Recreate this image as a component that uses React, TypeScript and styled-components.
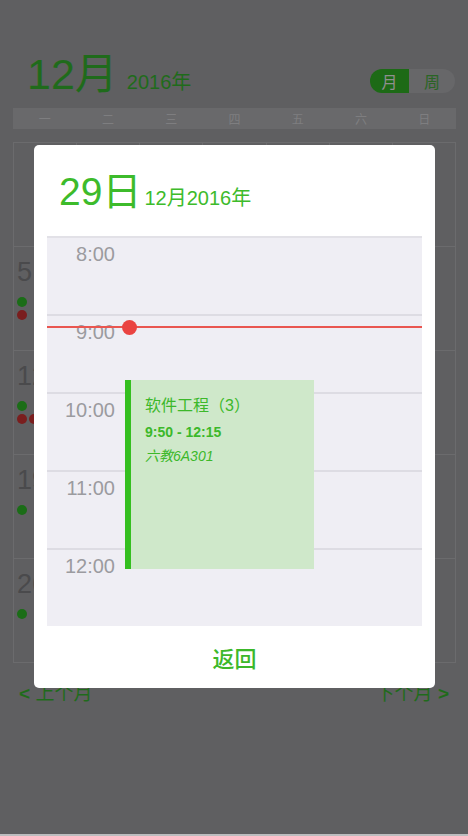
import React from "react";
import styled, { createGlobalStyle } from "styled-components";

const FONT = `"Liberation Sans", "Noto Sans CJK SC", sans-serif`;
const HOUR = 78;
const START = 8;

const GlobalStyle = createGlobalStyle`
  html, body { margin: 0; padding: 0; background: #5f5f61; }
  body { font-family: ${FONT}; }
  * { box-sizing: border-box; }
`;

const Page = styled.div`
  position: relative;
  width: 468px;
  height: 836px;
  overflow: hidden;
  background: #5f5f61;
  border-bottom: 2px solid #bdbdbf;
`;

const Header = styled.div`
  display: flex;
  align-items: flex-end;
  justify-content: space-between;
  padding: 52px 13px 11px 27px;
`;

const TitleGroup = styled.div`
  display: flex;
  align-items: baseline;
  gap: 9px;
  color: #1f6b1b;
`;

const BigTitle = styled.span`
  font-size: 43px;
  line-height: 45px;
`;

const SmallTitle = styled.span`
  font-size: 20px;
  line-height: 20px;
`;

const Toggle = styled.div`
  display: flex;
  height: 24px;
  margin-bottom: 4px;
  border-radius: 12px;
  overflow: hidden;
`;

const ToggleItem = styled.div<{ $active?: boolean }>`
  display: flex;
  align-items: center;
  justify-content: center;
  width: ${(p) => (p.$active ? 39 : 46)}px;
  font-size: 16px;
  background: ${(p) => (p.$active ? "#1d6a16" : "#676769")};
  color: ${(p) => (p.$active ? "#8f8f8f" : "#2a6525")};
`;

const WeekBar = styled.div`
  display: grid;
  grid-template-columns: repeat(7, 1fr);
  height: 21px;
  margin: 0 12px 13px 13px;
  background: #69696b;
`;

const WeekLabel = styled.div`
  display: flex;
  align-items: center;
  justify-content: center;
  font-size: 12px;
  color: #7e7e80;
`;

const Grid = styled.div`
  display: grid;
  grid-template-columns: repeat(7, 1fr);
  margin: 0 12px 0 13px;
  border-top: 1px solid #6b6b6d;
  border-left: 1px solid #6b6b6d;
`;

const Cell = styled.div`
  height: 104px;
  padding: 12px 0 0 3px;
  border-right: 1px solid #6b6b6d;
  border-bottom: 1px solid #6b6b6d;
`;

const DayNum = styled.div`
  font-size: 27px;
  line-height: 27px;
  color: #4a4a4c;
`;

const Dots = styled.div`
  display: flex;
  flex-direction: column;
  gap: 3px;
  margin-top: 11px;
`;

const DotRow = styled.div`
  display: flex;
  gap: 2px;
`;

const Dot = styled.span<{ $red?: boolean }>`
  width: 10px;
  height: 10px;
  border-radius: 50%;
  background: ${(p) => (p.$red ? "#7a1e1e" : "#1b6d17")};
`;

const Nav = styled.div`
  display: flex;
  justify-content: space-between;
  padding: 21px 19px 0 19px;
  font-size: 19px;
  line-height: 19px;
  color: #1f6b1b;
`;

const Arrow = styled.b`
  font-weight: 700;
`;

const Overlay = styled.div`
  position: absolute;
  inset: 0;
  display: flex;
  justify-content: center;
  align-items: flex-start;
  padding-top: 145px;
`;

const Dialog = styled.div`
  width: 401px;
  margin-left: 1px;
  background: #ffffff;
  border-radius: 5px;
  overflow: hidden;
`;

const DialogHeader = styled.div`
  display: flex;
  align-items: baseline;
  gap: 3px;
  height: 91px;
  padding: 27px 0 0 25px;
  color: #3dbb2b;
`;

const DayTitle = styled.span`
  font-size: 39px;
  line-height: 40px;
`;

const MonthTitle = styled.span`
  font-size: 20px;
  line-height: 20px;
`;

const Timeline = styled.div`
  position: relative;
  margin: 0 13px;
  background: #efeef4;
`;

const HourRow = styled.div`
  height: ${HOUR}px;
  border-top: 2px solid #dddce3;
  &:first-child {
    border-top-color: #e2e1e7;
  }
`;

const HourLabel = styled.div`
  width: 68px;
  padding-top: 6px;
  text-align: right;
  font-size: 20px;
  line-height: 20px;
  color: #9b9b9f;
`;

const NowLine = styled.div`
  position: absolute;
  z-index: 2;
  left: 0;
  right: 0;
  height: 2px;
  margin-top: -1px;
  background: #e95650;
`;

const NowDot = styled.div`
  position: absolute;
  z-index: 3;
  left: 75px;
  width: 15px;
  height: 15px;
  margin-top: -7px;
  border-radius: 50%;
  background: #ea4341;
`;

const Event = styled.div`
  position: absolute;
  z-index: 1;
  left: 78px;
  width: 189px;
  display: flex;
  flex-direction: column;
  padding: 15px 0 0 14px;
  background: #cfe8ca;
  border-left: 6px solid #34bf1f;
  color: #3cb82a;
`;

const EventTitle = styled.div`
  font-size: 16px;
  line-height: 22px;
`;

const EventTime = styled.div`
  margin-top: 6px;
  font-size: 14px;
  line-height: 18px;
  font-weight: 700;
`;

const EventPlace = styled.div`
  margin-top: 6px;
  font-size: 14px;
  line-height: 18px;
  font-style: italic;
`;

const Footer = styled.div`
  display: flex;
  align-items: center;
  justify-content: center;
  height: 62px;
  font-size: 22px;
  font-weight: 500;
  color: #3cb82a;
`;

const weekdays = ["一", "二", "三", "四", "五", "六", "日"];

const cells: (number | null)[] = [null, null, null];
for (let d = 1; d <= 31; d++) cells.push(d);
while (cells.length < 35) cells.push(null);

const dotMap: Record<number, boolean[][]> = {
  5: [[false], [true]],
  12: [[false], [true, true]],
  19: [[false]],
  26: [[false]],
};

const hours = ["8:00", "9:00", "10:00", "11:00", "12:00"];

const toY = (h: number, m: number) => Math.round((h + m / 60 - START) * HOUR + 1);

export default function App() {
  const evTop = toY(9, 50);
  const evBottom = toY(12, 15);
  const nowY = toY(9, 9);
  return (
    <>
      <GlobalStyle />
      <Page>
        <Header>
          <TitleGroup>
            <BigTitle>12月</BigTitle>
            <SmallTitle>2016年</SmallTitle>
          </TitleGroup>
          <Toggle>
            <ToggleItem $active>月</ToggleItem>
            <ToggleItem>周</ToggleItem>
          </Toggle>
        </Header>
        <WeekBar>
          {weekdays.map((w) => (
            <WeekLabel key={w}>{w}</WeekLabel>
          ))}
        </WeekBar>
        <Grid>
          {cells.map((d, i) => (
            <Cell key={i}>
              {d !== null && <DayNum>{d}</DayNum>}
              {d !== null && dotMap[d] && (
                <Dots>
                  {dotMap[d].map((row, ri) => (
                    <DotRow key={ri}>
                      {row.map((red, di) => (
                        <Dot key={di} $red={red} />
                      ))}
                    </DotRow>
                  ))}
                </Dots>
              )}
            </Cell>
          ))}
        </Grid>
        <Nav>
          <span>
            <Arrow>&lt;</Arrow> 上个月
          </span>
          <span>
            下个月 <Arrow>&gt;</Arrow>
          </span>
        </Nav>
        <Overlay>
          <Dialog>
            <DialogHeader>
              <DayTitle>29日</DayTitle>
              <MonthTitle>12月2016年</MonthTitle>
            </DialogHeader>
            <Timeline>
              {hours.map((h) => (
                <HourRow key={h}>
                  <HourLabel>{h}</HourLabel>
                </HourRow>
              ))}
              <Event style={{ top: evTop, height: evBottom - evTop }}>
                <EventTitle>软件工程（3）</EventTitle>
                <EventTime>9:50 - 12:15</EventTime>
                <EventPlace>六教6A301</EventPlace>
              </Event>
              <NowLine style={{ top: nowY }} />
              <NowDot style={{ top: nowY }} />
            </Timeline>
            <Footer>返回</Footer>
          </Dialog>
        </Overlay>
      </Page>
    </>
  );
}
